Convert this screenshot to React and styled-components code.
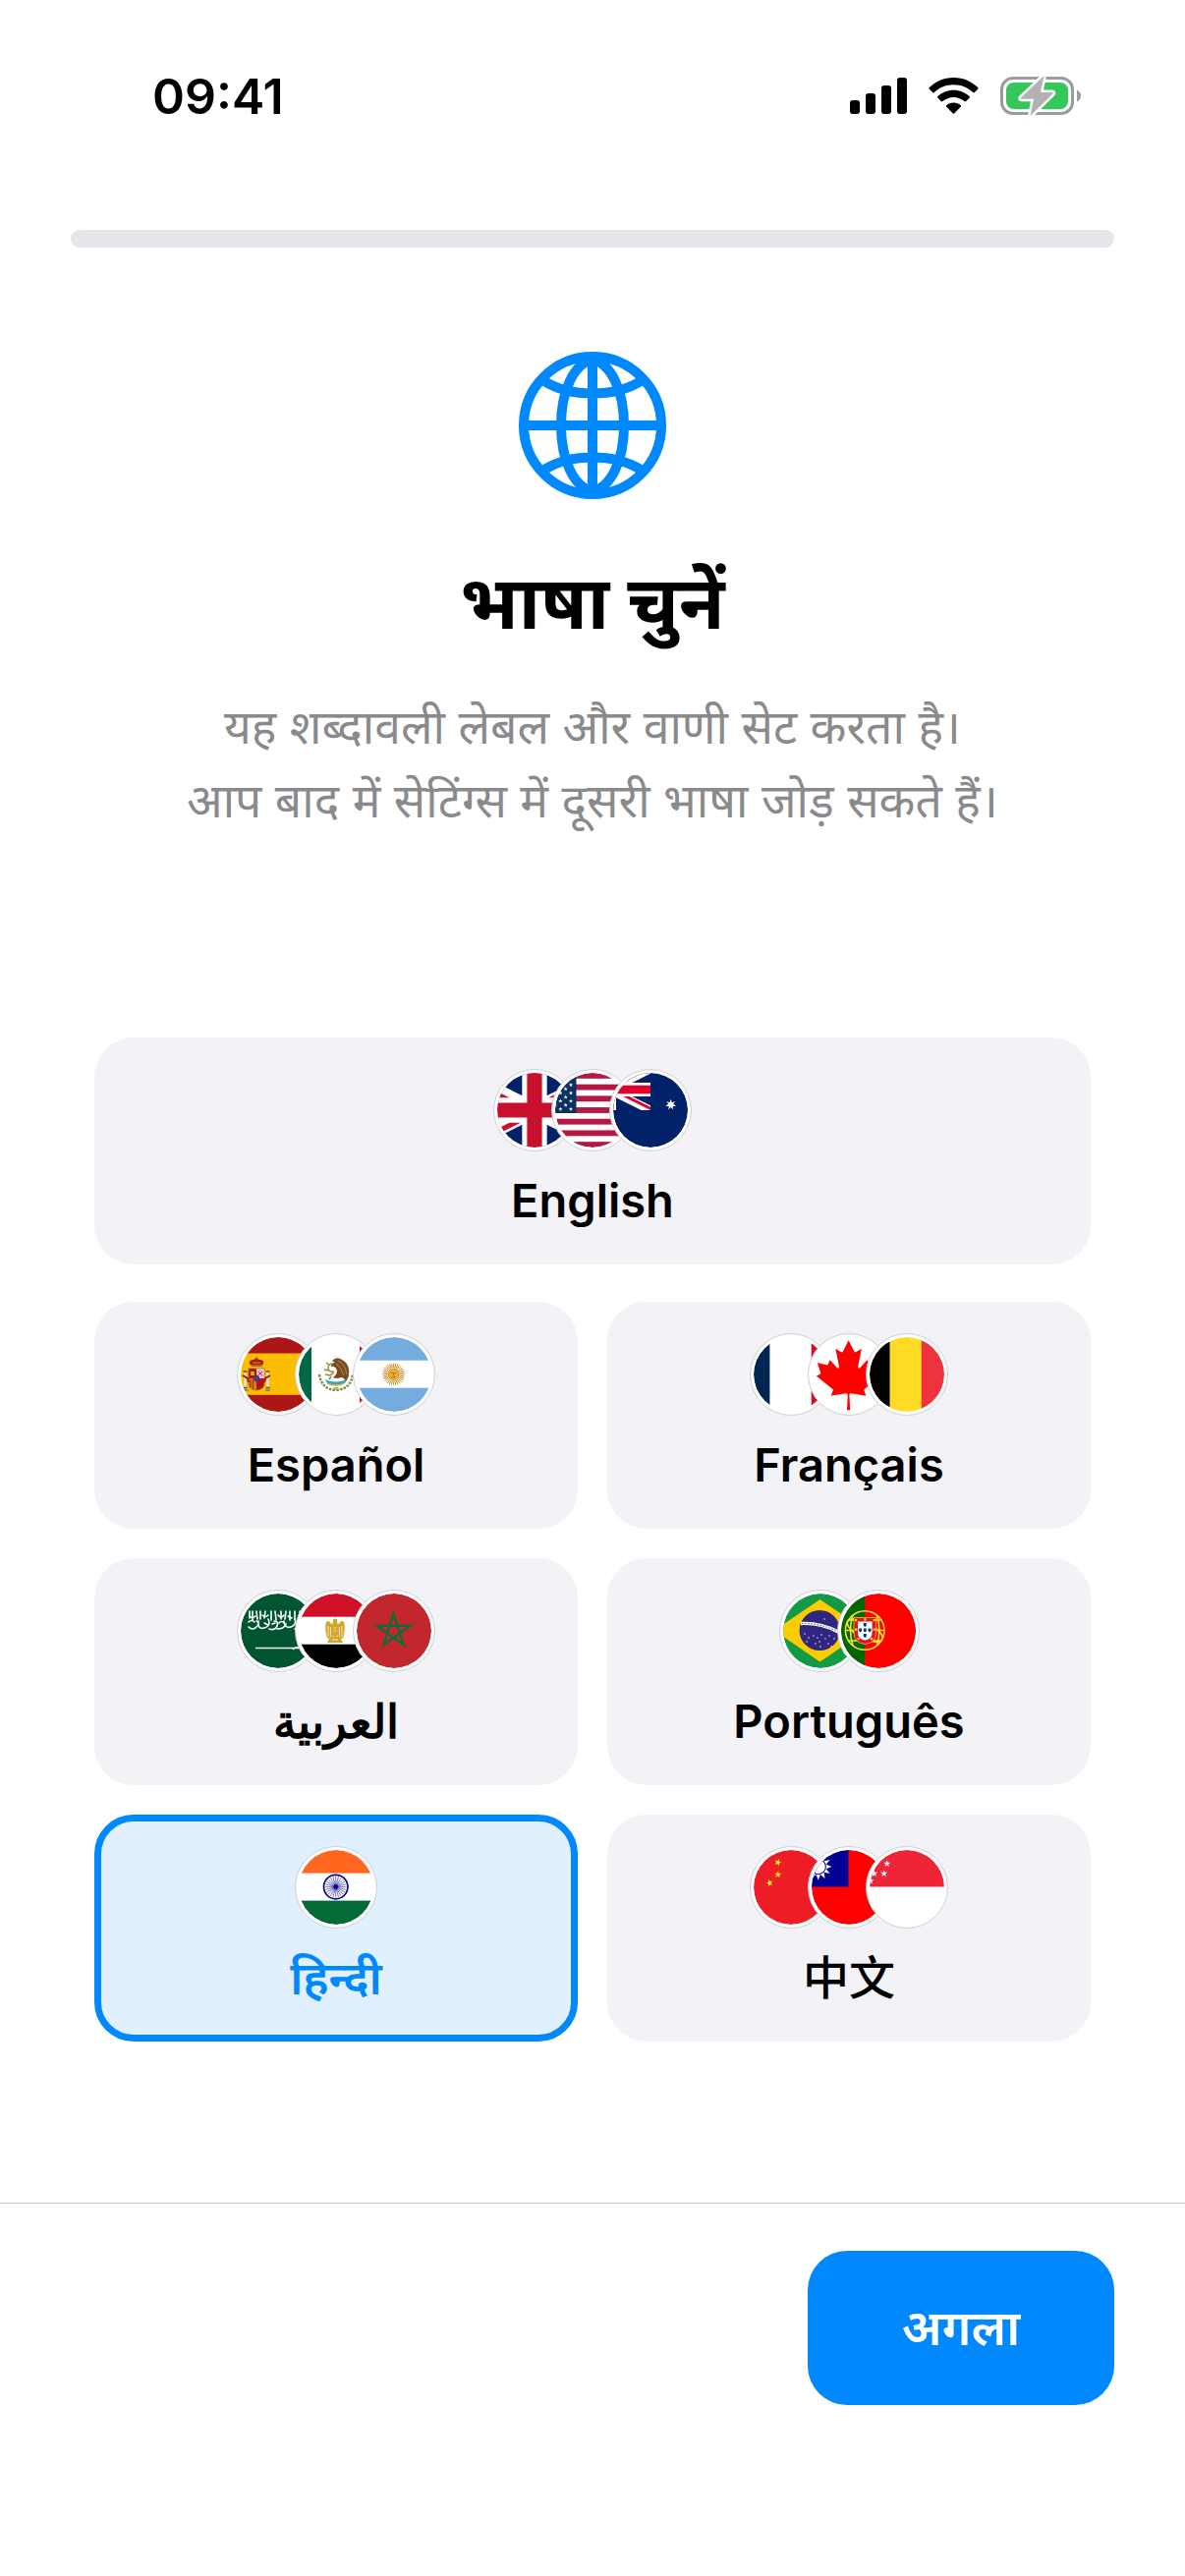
import React, { useState } from 'react'
import styled, { createGlobalStyle } from 'styled-components'

const GlobalStyle = createGlobalStyle`
  * {
    box-sizing: border-box;
  }
  body {
    margin: 0;
    background-color: #fff;
    font-family: Inter, 'Noto Sans', 'Noto Sans Devanagari', 'Noto Sans CJK SC', sans-serif;
    color: #000;
  }
  button {
    font-family: inherit;
    cursor: pointer;
  }
`

const Screen = styled.div`
  min-height: 100vh;
  display: flex;
  flex-direction: column;
`

const StatusBar = styled.header`
  display: flex;
  justify-content: space-between;
  align-items: center;
  padding: 68px 106px 0 155px;
`

const Clock = styled.time`
  font-size: 50px;
  line-height: 60px;
  font-weight: 600;
`

const StatusIcons = styled.div`
  display: flex;
  align-items: center;
  gap: 22px;
  svg {
    display: block;
  }
`

const Progress = styled.div`
  height: 18px;
  margin: 106px 72px 0;
  border-radius: 9px;
  background-color: #e5e5ea;
`

const Main = styled.main`
  flex: 1;
  display: flex;
  flex-direction: column;
  align-items: center;
  padding: 106px 96px 160px;
`

const Title = styled.h1`
  margin: 44px 0 0;
  font-size: 76px;
  line-height: 120px;
  font-weight: 700;
`

const Subtitle = styled.p`
  margin: 30px 0 0;
  font-size: 48px;
  line-height: 75px;
  text-align: center;
  color: #8a8a8c;
`

const Languages = styled.div`
  width: 100%;
  margin-top: 204px;
  display: grid;
  grid-template-columns: 1fr 1fr;
  gap: 30px;
`

const LanguageButton = styled.button`
  grid-column: ${props => props.$wide ? '1 / -1' : 'auto'};
  margin: 0 0 ${props => props.$wide ? '8px' : '0'};
  display: flex;
  flex-direction: column;
  align-items: center;
  gap: 20px;
  padding: 25px 20px 28px;
  border: 7px solid ${props => props.$selected ? '#0088ff' : 'transparent'};
  border-radius: 40px;
  background-color: ${props => props.$selected ? '#e0f0ff' : '#f2f2f7'};
  color: ${props => props.$selected ? '#0088ff' : '#000'};
  font-size: 47px;
  line-height: 60px;
  font-weight: ${props => props.$weight};
`

const Flags = styled.span`
  display: flex;
`

const FlagCircle = styled.svg`
  display: block;
  width: 84px;
  height: 84px;
  padding: 3px;
  border: 1px solid #cfcfd6;
  border-radius: 50%;
  background-color: #fff;
  & + & {
    margin-left: -25px;
  }
`

const Footer = styled.footer`
  display: flex;
  justify-content: flex-end;
  padding: 48px 72px 174px;
  border-top: 1px solid #c6c6c8;
`

const NextButton = styled.button`
  min-width: 312px;
  padding: 48px 90px 49px;
  border: 0;
  border-radius: 40px;
  background-color: #0088ff;
  color: #fff;
  font-size: 50px;
  line-height: 60px;
  font-weight: 600;
`

// points of a regular star, first point straight up unless turned
const starPoints = (cx, cy, r, inner = 0.382, count = 5, turn = 0) => {
  const points = []
  for (let i = 0; i < count * 2; i++) {
    const radius = i % 2 ? r * inner : r
    const angle = (Math.PI * i) / count - Math.PI / 2 + turn
    points.push(`${(cx + radius * Math.cos(angle)).toFixed(2)},${(cy + radius * Math.sin(angle)).toFixed(2)}`)
  }
  return points.join(' ')
}

const Star = ({ x, y, r, fill = '#fff', inner, count, turn }) => (
  <polygon points={starPoints(x, y, r, inner, count, turn)} fill={fill} />
)

const range = count => Array.from({ length: count }, (_, i) => i)

const UnionJack = ({ red = '#c8102e' }) => (
  <>
    <path d="M0 0h60v30H0z" fill="#012169" />
    <path d="M0 0l60 30M60 0L0 30" stroke="#fff" strokeWidth="6" />
    <path d="M0 0l30 15h-4.5L0 2.25zM60 0L30 15V12.8L55.5 0zM60 30L30 15h4.5L60 27.75zM0 30l30-15v2.2L4.5 30z" fill={red} />
    <path d="M30 0v30M0 15h60" stroke="#fff" strokeWidth="10" />
    <path d="M30 0v30M0 15h60" stroke={red} strokeWidth="6" />
  </>
)

const HorizontalBands = ({ colors, edges }) => (
  <>
    <rect width="76" height="76" fill={colors[1]} />
    <rect width="76" height={edges[0]} fill={colors[0]} />
    <rect y={edges[1]} width="76" height={76 - edges[1]} fill={colors[2]} />
  </>
)

const VerticalBands = ({ colors, edges }) => (
  <>
    <rect width="76" height="76" fill={colors[1]} />
    <rect width={edges[0]} height="76" fill={colors[0]} />
    <rect x={edges[1]} width={76 - edges[1]} height="76" fill={colors[2]} />
  </>
)

const Emblem = {
  gb: (
    <g transform="translate(-38 0) scale(2.5333)"><UnionJack /></g>
  ),
  us: (
    <>
      <rect width="76" height="76" fill="#fff" />
      {range(7).map(i => <rect key={i} y={(i * 152) / 13} width="76" height={76 / 13} fill="#b31942" />)}
      <rect width="21.5" height="41" fill="#0a3161" />
      {range(9).map(row => (row % 2 ? [0, 10.7] : [5.4, 16]).map(x => (
        <Star key={`${row}-${x}`} x={x} y={4.1 * (row + 1)} r={2.3} />
      )))}
    </>
  ),
  au: (
    <>
      <rect width="76" height="76" fill="#012169" />
      <svg x="-46" y="-4" width="84" height="42" viewBox="0 0 60 30"><UnionJack red="#e4002b" /></svg>
      <Star x={58.7} y={32.4} r={5.6} inner={0.45} count={7} />
      <Star x={-2} y={55} r={6} inner={0.45} count={7} />
    </>
  ),
  es: (
    <>
      <HorizontalBands colors={['#ad1519', '#fabd00', '#ad1519']} edges={[16.5, 58.8]} />
      <path d="M9 27q-1-4 4-4l3-2 3 2q5 0 4 4l-2 3H11z" fill="#ad1519" />
      <path d="M10 29h12M12 26h8" stroke="#c8b100" strokeWidth="1.2" />
      <path d="M16 20v4" stroke="#7a5a10" strokeWidth="1" />
      <path d="M8 32h16v15q0 6-8 7-8-1-8-7z" fill="#ad1519" stroke="#8b5a12" strokeWidth="0.8" />
      <path d="M16 32h8v10h-8z" fill="#e8b9cf" />
      <path d="M8 42h8v12q-8-1-8-7z" fill="#c9871b" />
      <path d="M10 43v8M12.500 43v10M18 44l4 5M22 44l-4 5" stroke="#ad1519" strokeWidth="1" />
      <path d="M10 35h4v4h-4z" fill="#c8b100" />
      <path d="M18 35l4 4m0-4l-4 4" stroke="#b0478a" strokeWidth="1" />
      <ellipse cx="16" cy="42" rx="2.600" ry="3" fill="#005bbf" stroke="#ad1519" strokeWidth="1" />
      <path d="M4.500 36v15M27.500 36v15" stroke="#e8e0d8" strokeWidth="2.600" />
      <path d="M2.500 51.500h4M25.500 51.500h4M2.500 35h4M25.500 35h4" stroke="#7a4a20" strokeWidth="1.600" />
      <path d="M2 39l5 3 1 4M30 39l-5 3-1 4" stroke="#ad1519" strokeWidth="2" fill="none" />
      <path d="M2.500 54h5M25 54h5" stroke="#5a7fb0" strokeWidth="1.400" />
    </>
  ),
  mx: (
    <>
      <VerticalBands colors={['#006847', '#fff', '#ce1126']} edges={[13, 62]} />
      <path d="M21 38q2 15 17 16 15-1 17-16" fill="none" stroke="#7b8b4a" strokeWidth="2.400" strokeDasharray="2.500 1.200" />
      <path d="M27 43q10 5 22 0l-2 4q-9 4-18 0z" fill="#30a8b8" />
      <path d="M29 47q9 4 17 0" stroke="#c9a44a" strokeWidth="1.500" fill="none" />
      <path d="M34 24q5-5 10-1 6 3 7 10 1 7-3 12-2-4-5-4-4 2-8 0 4-3 4-7-2-5-6-4 0-4 4-4z" fill="#7a4a21" />
      <path d="M40 24q7 3 9 14M38 27q6 4 8 12" stroke="#b98a55" strokeWidth="1" fill="none" />
      <path d="M35 27q-5 0-5 4t4 4-2 4l-5-1" stroke="#a8842a" strokeWidth="1.400" fill="none" />
      <path d="M31 28l-3-2M30 34l-4-1M33 40l-2 3" stroke="#7b8b4a" strokeWidth="1.400" />
      <path d="M35 51l3 3 3-3" fill="#d8a12a" />
    </>
  ),
  ar: (
    <>
      <HorizontalBands colors={['#74acdf', '#fff', '#74acdf']} edges={[23.7, 51.7]} />
      {range(32).map(i => (
        <path key={i} d="M37.600 31V26.500" stroke="#c58a1c" strokeWidth="0.900" transform={`rotate(${i * 11.25} 37.600 37.700)`} />
      ))}
      <circle cx="37.600" cy="37.700" r="5.800" fill="#f0ac2c" stroke="#b3741a" strokeWidth="0.700" />
      <path d="M35 36.500h1.500M38.700 36.500h1.500M36 40.300q1.600 1 3.200 0M37.600 36.500v2" stroke="#8a4d10" strokeWidth="0.800" fill="none" />
    </>
  ),
  fr: <VerticalBands colors={['#002654', '#fff', '#ce1126']} edges={[16.4, 58.7]} />,
  ca: (
    <>
      <rect width="76" height="76" fill="#fff" />
      <path
        transform="translate(37.6 38.4) scale(0.0176)"
        fill="#f00"
        d="m-90 2030 45-863a95 95 0 0 0-111-98l-859 151 116-320a65 65 0 0 0-20-73l-941-762 212-99a65 65 0 0 0 34-79l-186-572 542 115a65 65 0 0 0 73-38l105-247 423 454a65 65 0 0 0 111-57l-204-1052 327 189a65 65 0 0 0 91-27l332-652 332 652a65 65 0 0 0 91 27l327-189-204 1052a65 65 0 0 0 111 57l423-454 105 247a65 65 0 0 0 73 38l542-115-186 572a65 65 0 0 0 34 79l212 99-941 762a65 65 0 0 0-20 73l116 320-859-151a95 95 0 0 0-111 98l45 863z"
      />
    </>
  ),
  be: <VerticalBands colors={['#000', '#fdda24', '#ef3340']} edges={[20.5, 52.8]} />,
  sa: (
    <>
      <rect width="76" height="76" fill="#005430" />
      <g fill="none" stroke="#fff" strokeWidth="1.600" strokeLinecap="round">
        <path d="M8 34q4 4 8 0t0-6M18 28q-1 9 6 7t4-9M29 36q6 2 8-3t-3-5M37 36q7 0 9-5M44 28q1 8 7 6t4-8M55 36q5-1 7-6" />
        <path d="M9 18v7M12 18v9M16 18l1 8M20 18v8M25 18l-1 7M31 18v9M35 18l1 9M41 18v8M46 18l-1 8M50 18v9M55 18v8M60 18v9" />
        <path d="M9 23q3 3 6 0M22 22q3 3 6 0M38 22q3 4 6 0M8 29q3-3 6 0M24 30l4 2M48 23l4 2M32 31l3-1M39 30q3-3 5 0" />
      </g>
      <path d="M15 55.500h44M53 57q3-3 5-2l4 1.500" fill="none" stroke="#fff" strokeWidth="1.400" />
    </>
  ),
  eg: (
    <>
      <HorizontalBands colors={['#ce1126', '#fff', '#000']} edges={[23.7, 51.7]} />
      <g fill="#d2a62a">
        <path d="M35 26.500q2-2 4 0l.5 5h-5z" />
        <path d="M27.500 31q0-3 3-3l4 4v12l-5 2q-3-6-2-15zM46.500 31q0-3-3-3l-4 4v12l5 2q3-6 2-15z" />
        <path d="M34 31h6v11l-3 3-3-3z" />
        <path d="M32 44h10l3 6H29z" />
      </g>
      <path d="M30 33v11M32.500 34v10M41.500 34v10M44 33v11M35.500 35h3M35.500 38h3M34 47h6" stroke="#fff" strokeWidth="0.700" />
    </>
  ),
  ma: (
    <>
      <rect width="76" height="76" fill="#c1272d" />
      <path d="M37.600 20.500L47.800 52.200 20.600 32.700H54.600L27.400 52.200z" fill="none" stroke="#106b37" strokeWidth="2.400" />
    </>
  ),
  br: (
    <>
      <rect width="76" height="76" fill="#129a44" />
      <path d="M37.500 6L84 37.700 37.500 69.400-9 37.700z" fill="#fecb00" />
      <circle cx="37.200" cy="37.500" r="20.600" fill="#302681" />
      <path d="M18 30.500q20-1 38 8.500" fill="none" stroke="#fff" strokeWidth="3.400" />
      <path d="M19 30.500q20-.5 36 8" fill="none" stroke="#3a8f5c" strokeWidth="1.200" strokeDasharray="1.500 1.600" />
      {[[22, 41], [26, 45], [24, 49], [31, 43], [35, 45], [39, 42], [43, 46], [33, 51], [38, 54], [46, 51], [49, 54], [52, 46], [37, 49], [47, 43], [42, 26]].map(([x, y]) => (
        <circle key={`${x}-${y}`} cx={x} cy={y} r="0.700" fill="#fff" />
      ))}
    </>
  ),
  pt: (
    <>
      <VerticalBands colors={['#060', '#f00', '#f00']} edges={[24.2, 60]} />
      <g fill="none" stroke="#f2e52c" strokeWidth="1.600">
        <circle cx="24.200" cy="37.500" r="19.800" />
        <ellipse cx="24.200" cy="37.500" rx="19.800" ry="8" transform="rotate(28 24.200 37.500)" />
        <path d="M4.500 37.500h39.500M8 27h32.500M8 48h32.500" />
        <path d="M12 22q-5 15 0 31M36.400 22q5 15 0 31" />
      </g>
      <path d="M13 24.500h22.600v15q0 11-11.300 12Q13 50.500 13 39.500z" fill="#e1141c" stroke="#f2e52c" strokeWidth="0.700" />
      <path d="M17 28.500h14.600v11q0 7-7.300 8-7.300-1-7.300-8z" fill="#fff" />
      {[[24.3, 32], [24.3, 37.5], [24.3, 43], [19.6, 37.5], [29, 37.5]].map(([x, y]) => (
        <path key={`${x}-${y}`} d={`M${x - 1.5} ${y - 2}h3v2.500q-1.500 2.500-3 0z`} fill="#039" />
      ))}
      {[[15, 27], [24.3, 26.3], [33.6, 27], [15, 36.5], [33.6, 36.5], [17.5, 46], [31, 46]].map(([x, y]) => (
        <rect key={`${x}-${y}`} x={x - 1} y={y - 1} width="2.200" height="2.200" fill="#ffd83c" />
      ))}
    </>
  ),
  in: (
    <>
      <HorizontalBands colors={['#ff671f', '#fff', '#046a38']} edges={[23.6, 51.6]} />
      <circle cx="37.700" cy="37.600" r="12.200" fill="none" stroke="#06038d" strokeWidth="1.700" />
      {range(24).map(i => (
        <path key={i} d="M37.700 37.600V27" stroke="#06038d" strokeWidth="0.500" transform={`rotate(${i * 15} 37.700 37.600)`} />
      ))}
      <circle cx="37.700" cy="37.600" r="2.400" fill="#06038d" />
    </>
  ),
  cn: (
    <>
      <rect width="76" height="76" fill="#ee1c25" />
      <Star x={24.7} y={12.7} r={3.8} fill="#ff0" turn={0.3} />
      <Star x={24.7} y={25} r={3.8} fill="#ff0" turn={0.1} />
      <Star x={16.3} y={33.5} r={3.8} fill="#ff0" turn={-0.3} />
    </>
  ),
  tw: (
    <>
      <rect width="76" height="76" fill="#fe0000" />
      <rect width="37.500" height="37.500" fill="#000095" />
      <Star x={6.7} y={17} r={13.8} inner={0.6} count={12} />
      <circle cx="6.700" cy="17" r="8.200" fill="#000095" />
      <circle cx="6.700" cy="17" r="7.200" fill="#fff" />
    </>
  ),
  sg: (
    <>
      <rect width="76" height="76" fill="#fff" />
      <rect width="76" height="37.500" fill="#ee2536" />
      <Star x={17.8} y={14} r={3.7} />
      <Star x={14.7} y={24} r={3.7} />
      <Star x={4.7} y={24} r={3.7} />
      <Star x={1} y={31.5} r={3.7} />
    </>
  ),
}

const Flag = ({ code }) => (
  <FlagCircle viewBox="0 0 76 76" aria-hidden="true">
    <clipPath id={`flag-${code}`}>
      <circle cx="38" cy="38" r="38" />
    </clipPath>
    <g clipPath={`url(#flag-${code})`}>{Emblem[code]}</g>
  </FlagCircle>
)

const SignalIcon = () => (
  <svg width="58" height="38" viewBox="0 0 58 38" aria-hidden="true">
    <rect x="0" y="23" width="10" height="14" rx="3" />
    <rect x="16" y="16" width="10" height="21" rx="3" />
    <rect x="32" y="8" width="10" height="29" rx="3" />
    <rect x="48" y="0" width="10" height="37" rx="3" />
  </svg>
)

const WifiIcon = () => (
  <svg width="51" height="38" viewBox="0 0 51 38" aria-hidden="true">
    <path d="M25.500 0C35.500 0 44 4 50.200 10.100q.7.800 0 1.600l-3.400 3.400q-.8.700-1.600 0C39.800 10 33 7.300 25.500 7.300S11.200 10 5.800 15.100q-.8.700-1.600 0L.8 11.700q-.7-.8 0-1.600C7 4 15.500 0 25.500 0z" />
    <path d="M25.500 12.700c6.500 0 12 2.500 16.200 6.300q.7.800 0 1.600l-3.500 3.500q-.8.700-1.600 0c-3-2.600-6.800-4.200-11.100-4.200s-8.100 1.600-11.100 4.200q-.8.700-1.600 0l-3.500-3.500q-.7-.8 0-1.600c4.200-3.800 9.700-6.300 16.200-6.300z" />
    <path d="M25.500 25.500c2.800 0 5.300 1 7.200 2.600q.9.800 0 1.700l-6.300 6.500q-.9.900-1.800 0l-6.300-6.500q-.9-.9 0-1.700c1.900-1.600 4.400-2.600 7.200-2.600z" />
  </svg>
)

const BatteryIcon = () => (
  <svg width="82" height="42" viewBox="0 0 82 42" aria-hidden="true">
    <rect x="1.500" y="2.500" width="72" height="36" rx="11.500" fill="none" stroke="#9b9b9b" strokeWidth="3" />
    <path d="M78 14.500q4 2 4 6t-4 6z" fill="#9b9b9b" />
    <rect x="6" y="7" width="63" height="27" rx="7.500" fill="#34c759" />
    <path d="M44.500 0L21 22.500q-.8 1.300 1 1.300h12L30.500 41 53.500 18.500q.8-1.400-1-1.400H41z" fill="#b2b2b2" stroke="#fff" strokeWidth="5" strokeLinejoin="round" paintOrder="stroke" />
  </svg>
)

const GlobeIcon = () => (
  <svg width="150" height="150" viewBox="0 0 150 150" fill="none" stroke="#0088ff" strokeWidth="10" strokeLinecap="round" aria-hidden="true">
    <circle cx="75" cy="75" r="70" />
    <path d="M75 8v134M9 75h132M26 30q20 12.500 49 12.500T124 30M26 120q20-12.500 49-12.500t49 12.500" />
    <path d="M75 8C56 12 43 40 43 75s13 63 32 67C94 138 107 110 107 75S94 12 75 8z" />
  </svg>
)

const languages = [
  { name: 'English', lang: 'en', flags: ['gb', 'us', 'au'], wide: true },
  { name: 'Español', lang: 'es', flags: ['es', 'mx', 'ar'] },
  { name: 'Français', lang: 'fr', flags: ['fr', 'ca', 'be'] },
  { name: 'العربية', lang: 'ar', flags: ['sa', 'eg', 'ma'] },
  { name: 'Português', lang: 'pt', flags: ['br', 'pt'] },
  { name: 'हिन्दी', lang: 'hi', flags: ['in'] },
  { name: '中文', lang: 'zh', flags: ['cn', 'tw', 'sg'], weight: 500 },
]

const App = () => {
  const [selected, setSelected] = useState('hi')

  return (
    <Screen lang="hi">
      <GlobalStyle />
      <StatusBar>
        <Clock>09:41</Clock>
        <StatusIcons>
          <SignalIcon />
          <WifiIcon />
          <BatteryIcon />
        </StatusIcons>
      </StatusBar>
      <Progress role="progressbar" aria-valuemin={0} aria-valuemax={100} aria-valuenow={0} />
      <Main>
        <GlobeIcon />
        <Title>भाषा चुनें</Title>
        <Subtitle>
          यह शब्दावली लेबल और वाणी सेट करता है।<br />
          आप बाद में सेटिंग्स में दूसरी भाषा जोड़ सकते हैं।
        </Subtitle>
        <Languages>
          {languages.map(({ name, lang, flags, wide, weight = 600 }) => (
            <LanguageButton
              key={lang}
              type="button"
              lang={lang}
              aria-pressed={selected === lang}
              $wide={wide}
              $selected={selected === lang}
              $weight={weight}
              onClick={() => setSelected(lang)}
            >
              <Flags>
                {flags.map(code => <Flag key={code} code={code} />)}
              </Flags>
              <span>{name}</span>
            </LanguageButton>
          ))}
        </Languages>
      </Main>
      <Footer>
        <NextButton type="button">अगला</NextButton>
      </Footer>
    </Screen>
  )
}

export default App
